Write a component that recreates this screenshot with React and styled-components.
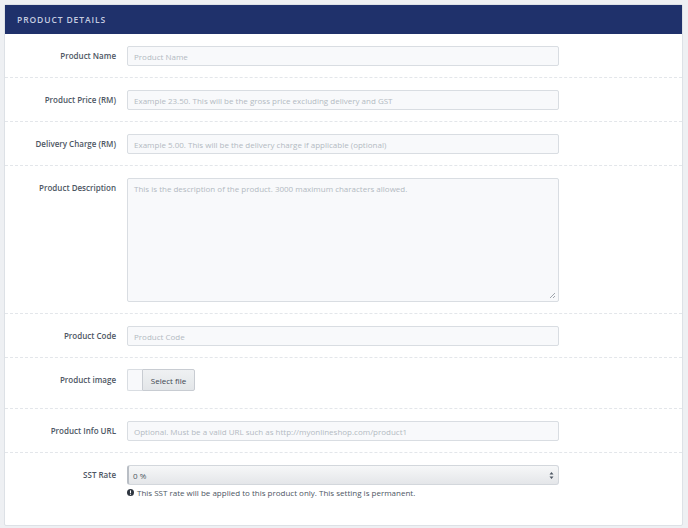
import React from 'react';
import styled, { createGlobalStyle } from 'styled-components';

const Global = createGlobalStyle`
  html, body { margin: 0; background: #eef0f3; }
  body { font-family: "Open Sans", Lato, sans-serif; }
  * { box-sizing: border-box; }
`;

const Page = styled.div`
  padding: 4px 5px 8px 4px;
`;

const Card = styled.div`
  background: #fff;
  border: 1px solid #dde1e6;
  border-radius: 2px;
`;

const Header = styled.div`
  height: 29px;
  background: #1f316b;
  color: #c6cde0;
  font-size: 8.5px;
  font-weight: 600;
  letter-spacing: 0.9px;
  display: flex;
  align-items: center;
  padding-left: 12px;
`;

const Row = styled.div`
  display: grid;
  grid-template-columns: 111px 432px;
  column-gap: 11px;
  align-items: start;
  padding: ${p => p.$pad || '12px 0 11px'};
  border-bottom: ${p => (p.$last ? 'none' : '1px dashed #e3e6ea')};
`;

const Label = styled.label`
  text-align: right;
  font-size: 8px;
  font-weight: 600;
  color: #4d5663;
  line-height: 20px;
`;

const Input = styled.div`
  height: ${p => p.$h || 20}px;
  border: 1px solid #d9dde2;
  border-radius: 2px;
  background: #f8f9fb;
  color: #b3b9c2;
  font-size: 8px;
  padding: ${p => (p.$area ? '4px 6px' : '0 6px')};
  display: flex;
  align-items: ${p => (p.$area ? 'flex-start' : 'center')};
  position: relative;
`;

const Grip = styled.svg`
  position: absolute;
  right: 2px;
  bottom: 2px;
`;

const FileBox = styled.div`
  display: flex;
  height: 22px;
  margin-top: -1px;
`;

const FileBlank = styled.div`
  width: 15px;
  border: 1px solid #d9dde2;
  border-right: none;
  border-radius: 2px 0 0 2px;
  background: #f8f9fb;
`;

const FileBtn = styled.div`
  width: 53px;
  border: 1px solid #c8ccd2;
  border-radius: 0 2px 2px 0;
  background: linear-gradient(#eff1f3, #e3e6e9);
  color: #3d4550;
  font-size: 8px;
  display: flex;
  align-items: center;
  justify-content: center;
`;

const Select = styled.div`
  height: 20px;
  border: 1px solid #d3d7dc;
  border-left: 2px solid #b9bec5;
  border-radius: 3px;
  background: linear-gradient(#f6f7f8, #e4e6e9);
  color: #4d5663;
  font-size: 8px;
  display: flex;
  align-items: center;
  justify-content: space-between;
  padding: 0 4px;
`;

const Help = styled.div`
  margin-top: 2px;
  font-size: 8px;
  color: #4d5663;
  display: flex;
  align-items: center;
  gap: 3px;
`;

const Fill = styled.div`
  height: 16px;
`;

const Field = ({ label, placeholder }) => (
  <Row>
    <Label>{label}</Label>
    <Input>{placeholder}</Input>
  </Row>
);

export default function App() {
  return (
    <Page>
      <Global />
      <Card>
        <Header>PRODUCT DETAILS</Header>
        <Field label="Product Name" placeholder="Product Name" />
        <Field label="Product Price (RM)" placeholder="Example 23.50. This will be the gross price excluding delivery and GST" />
        <Field label="Delivery Charge (RM)" placeholder="Example 5.00. This will be the delivery charge if applicable (optional)" />
        <Row>
          <Label>Product Description</Label>
          <Input $area $h={124}>
            This is the description of the product. 3000 maximum characters allowed.
            <Grip width="7" height="7" viewBox="0 0 7 7">
              <path d="M6 1L1 6M6 4L4 6" stroke="#8a9099" strokeWidth="0.8" />
            </Grip>
          </Input>
        </Row>
        <Field label="Product Code" placeholder="Product Code" />
        <Row $pad="12px 0 17px">
          <Label>Product image</Label>
          <FileBox>
            <FileBlank />
            <FileBtn>Select file</FileBtn>
          </FileBox>
        </Row>
        <Field label="Product Info URL" placeholder="Optional. Must be a valid URL such as http://myonlineshop.com/product1" />
        <Row $last>
          <Label>SST Rate</Label>
          <div>
            <Select>
              <span>0 %</span>
              <svg width="5" height="9" viewBox="0 0 5 9">
                <path d="M0.5 3.5L2.5 1L4.5 3.5ZM0.5 5.5L2.5 8L4.5 5.5Z" fill="#4d5663" />
              </svg>
            </Select>
            <Help>
              <svg width="7" height="7" viewBox="0 0 8 8">
                <circle cx="4" cy="4" r="4" fill="#2f3640" />
                <rect x="3.4" y="1.6" width="1.2" height="3.2" fill="#fff" />
                <rect x="3.4" y="5.5" width="1.2" height="1.1" fill="#fff" />
              </svg>
              This SST rate will be applied to this product only. This setting is permanent.
            </Help>
            <Fill />
          </div>
        </Row>
      </Card>
    </Page>
  );
}
